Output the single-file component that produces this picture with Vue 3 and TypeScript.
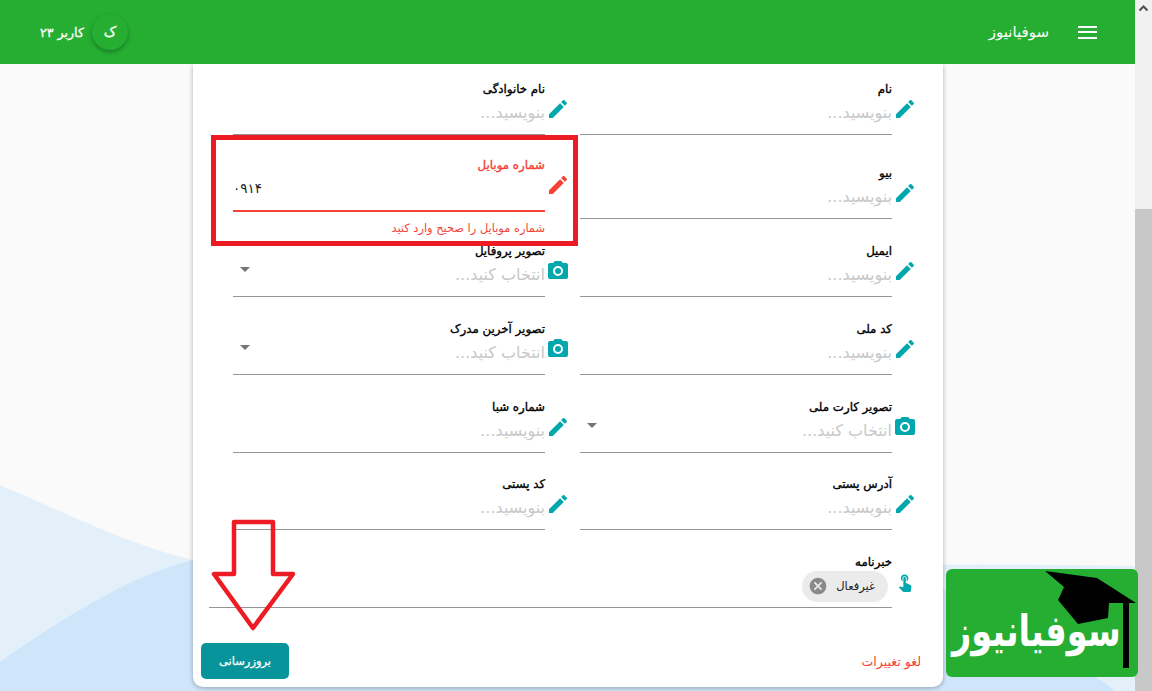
<script setup lang="ts">
interface Field { label: string; kind: 'text' | 'select' }
const rows: Field[][] = [
  [{ label: 'نام', kind: 'text' }, { label: 'نام خانوادگی', kind: 'text' }],
  [{ label: 'بیو', kind: 'text' }, { label: 'شماره موبایل', kind: 'text' }],
  [{ label: 'ایمیل', kind: 'text' }, { label: 'تصویر پروفایل', kind: 'select' }],
  [{ label: 'کد ملی', kind: 'text' }, { label: 'تصویر آخرین مدرک', kind: 'select' }],
  [{ label: 'تصویر کارت ملی', kind: 'select' }, { label: 'شماره شبا', kind: 'text' }],
  [{ label: 'آدرس پستی', kind: 'text' }, { label: 'کد پستی', kind: 'text' }],
]
const fields = rows.flat()
const pencil = 'M20.71,7.04C21.1,6.65 21.1,6 20.71,5.63L18.37,3.29C18,2.9 17.35,2.9 16.96,3.29L15.12,5.12L18.87,8.87M3,17.25V21H6.75L17.81,9.93L14.06,6.18L3,17.25Z'
const camera = 'M4,4H7L9,2H15L17,4H20A2,2 0 0,1 22,6V18A2,2 0 0,1 20,20H4A2,2 0 0,1 2,18V6A2,2 0 0,1 4,4M12,7A5,5 0 0,0 7,12A5,5 0 0,0 12,17A5,5 0 0,0 17,12A5,5 0 0,0 12,7M12,9A3,3 0 0,1 15,12A3,3 0 0,1 12,15A3,3 0 0,1 9,12A3,3 0 0,1 12,9Z'
</script>

<template>
  <div class="page">
    <div class="main">
      <svg class="waves" width="1135" height="691" viewBox="0 0 1135 691">
        <path d="M0,485C70,515 130,545 193,560C400,575 800,560 1135,566V691H0Z" fill="#e3f0fa" />
        <path d="M0,662C60,620 130,575 193,560C500,520 850,520 945,590C1010,630 1070,655 1115,691H0Z" fill="#cfe5f9" />
      </svg>

      <header class="bar" dir="rtl">
        <button class="burger" aria-label="menu"><i></i><i></i><i></i></button>
        <div class="brand">سوفیانیوز</div>
        <div class="spacer"></div>
        <div class="avatar">ک</div>
        <div class="user">کاربر ۲۳</div>
      </header>

      <section class="card" dir="rtl">
        <div class="grid">
          <div v-for="f in fields" :key="f.label" class="field" :class="{ bad: f.label === 'شماره موبایل' }">
            <svg class="ico" viewBox="0 0 24 24"><path :d="f.kind === 'text' ? pencil : camera" /></svg>
            <div class="ctl">
              <label>{{ f.label }}</label>
              <div class="line">
                <span v-if="f.label === 'شماره موبایل'" class="val">۰۹۱۴</span>
                <span v-else class="ph">{{ f.kind === 'text' ? 'بنویسید...' : 'انتخاب کنید...' }}</span>
                <span v-if="f.kind === 'select'" class="caret"></span>
              </div>
              <div v-if="f.label === 'شماره موبایل'" class="err">شماره موبایل را صحیح وارد کنید</div>
            </div>
          </div>
          <div class="field wide">
            <svg class="ico tap" viewBox="0 0 24 24"><path d="M9 11.24V7.5C9 6.12 10.12 5 11.5 5S14 6.12 14 7.5v3.74c1.21-.81 2-2.18 2-3.74C16 5.01 13.99 3 11.5 3S7 5.01 7 7.5c0 1.56.79 2.93 2 3.74zm9.84 4.63l-4.54-2.26c-.17-.07-.35-.11-.54-.11H13v-6c0-.83-.67-1.5-1.5-1.5S10 6.67 10 7.5v10.74l-3.43-.72c-.08-.01-.15-.03-.24-.03-.31 0-.59.13-.79.33l-.79.8 4.94 4.94c.27.27.65.44 1.06.44h6.79c.75 0 1.33-.55 1.44-1.28l.75-5.27c.01-.07.02-.14.02-.2 0-.62-.38-1.16-.91-1.38z" /></svg>
            <div class="ctl">
              <label>خبرنامه</label>
              <div class="line chipline">
                <span class="chip">
                  <span>غیرفعال</span>
                  <svg viewBox="0 0 24 24"><path d="M12,2C17.53,2 22,6.47 22,12C22,17.53 17.53,22 12,22C6.47,22 2,17.53 2,12C2,6.47 6.47,2 12,2M15.59,7L12,10.59L8.41,7L7,8.41L10.59,12L7,15.59L8.41,17L12,13.41L15.59,17L17,15.59L13.41,12L17,8.41L15.59,7Z" /></svg>
                </span>
              </div>
            </div>
          </div>
        </div>
        <div class="actions">
          <button class="cancel">لغو تغییرات</button>
          <button class="save">بروزرسانی</button>
        </div>
      </section>
    </div>

    <aside class="scroll">
      <svg class="up" width="17" height="17" viewBox="0 0 17 17"><path d="M4.5,10.5L8.5,6.5L12.5,10.5" fill="none" stroke="#505050" stroke-width="2" /></svg>
      <div class="thumb"></div>
    </aside>

    <div class="redbox"></div>
    <svg class="arrow" width="90" height="120" viewBox="0 0 90 120">
      <path d="M24,3H63V55H83L43,109L4,55H24Z" fill="none" stroke="#ed1c24" stroke-width="4.5" stroke-linejoin="round" />
    </svg>
    <div class="logo" dir="rtl">
      <svg width="192" height="108" viewBox="0 0 192 108">
        <path d="M99,2L151,9L190,34H183V99H177V34H163L162,49L132,55L112,31L118,18Z" fill="#000" />
      </svg>
      <span>سوفیانیوز</span>
    </div>
  </div>
</template>

<style>
html, body { margin: 0; overflow: hidden; }
</style>

<style scoped>
.page { position: relative; width: 1152px; height: 691px; overflow: hidden; display: flex; font-family: "DejaVu Sans", "Noto Sans", sans-serif; background: #fafafa; }
.main { position: relative; width: 1135px; height: 691px; flex: none; }
.waves { position: absolute; left: 0; top: 0; }
.bar { position: relative; z-index: 2; height: 64px; background: #25ae32; color: #fff; display: flex; align-items: center; padding: 0 38px 0 40px; box-sizing: border-box; }
.burger { width: 19px; height: 13px; padding: 0; background: none; border: 0; display: flex; flex-direction: column; justify-content: space-between; margin-left: 29px; }
.burger i { display: block; height: 2px; background: #fff; }
.brand { font-size: 15px; }
.spacer { flex: 1; }
.avatar { width: 36px; height: 36px; border-radius: 50%; background: #25ae32; box-shadow: 0 2px 4px rgba(0,0,0,.3); display: flex; align-items: center; justify-content: center; font-size: 14px; margin-left: 8px; -webkit-text-stroke: .3px #fff; }
.user { font-size: 12.6px; -webkit-text-stroke: .3px #fff; }
.card { position: relative; width: 750px; height: 623px; margin-left: 193px; box-sizing: border-box; background: #fff; border-radius: 0 0 10px 10px; box-shadow: 0 1px 5px rgba(0,0,0,.3); padding: 18px 26px 0 40px; }
.grid { display: grid; grid-template-columns: 337px 337px; column-gap: 10px; grid-template-rows: 53px 84px 78px 78px 78px 77px 78px; align-items: end; }
.field { display: flex; align-items: flex-start; height: 53px; position: relative; }
.ico { width: 24px; height: 24px; flex: none; margin: 15px 0 0 1px; fill: #00a8ad; }
.ctl { flex: 1; min-width: 0; height: 53px; box-sizing: border-box; border-bottom: 1px solid #949494; }
label { display: block; margin-top: -1px; font-size: 11.8px; line-height: 16px; color: #000; -webkit-text-stroke: .35px currentColor; }
.line { display: flex; justify-content: space-between; align-items: center; height: 30px; }
.ph { font-size: 16px; color: #c8c8c8; }
.val { font-size: 13.5px; color: #222; margin-right: auto; }
.caret { width: 0; height: 0; border: 5px solid transparent; border-top-color: #757575; border-bottom: 0; margin: 0 0 10px 7px; }
.bad { height: 78px; align-self: start; margin-top: 23px; }
.bad .ico { fill: #f44336; }
.bad .ctl { height: 54px; border-bottom: 2px solid #f44336; }
.bad label, .bad .err { color: #f44336; }
.err { font-size: 11.4px; line-height: 16px; margin-top: 17px; }
.wide { grid-column: 1 / -1; margin-left: -24px; }
.tap { width: 20px; height: 20px; margin: 17px 2px 0 3px; }
.chip { display: inline-flex; align-items: center; height: 31px; width: 86px; box-sizing: border-box; border-radius: 16px; background: #ebebeb; padding: 0 13px 0 6px; margin-right: 4px; font-size: 11.5px; color: #222; justify-content: space-between; }
.chip svg { width: 20px; height: 20px; fill: #8a8a8a; }
.chipline { height: 36px; margin-top: -2px; }
.actions { display: flex; justify-content: space-between; align-items: center; margin: 35px 0 0 -32px; }
.save { width: 88px; height: 36px; border: 0; border-radius: 5px; background: #07959b; color: #fff; font: 400 11.5px "DejaVu Sans", sans-serif; -webkit-text-stroke: .25px #fff; }
.cancel { border: 0; background: none; padding: 0; margin-right: -4px; color: #f44336; font: 400 12.5px "DejaVu Sans", sans-serif; }
.scroll { position: relative; width: 17px; flex: none; background: #f1f1f1; display: flex; flex-direction: column; }
.up { display: block; }
.thumb { width: 17px; height: 482px; margin-top: 192px; background: #c8c8c8; }
.redbox { position: absolute; left: 211px; top: 135px; width: 367px; height: 111px; box-sizing: border-box; border: 5px solid #ed1c24; z-index: 5; pointer-events: none; }
.arrow { position: absolute; left: 210px; top: 519px; z-index: 5; }
.logo { position: absolute; left: 946px; top: 569px; width: 192px; height: 108px; border-radius: 6px; background: #25ae32; z-index: 6; overflow: hidden; }
.logo svg { position: absolute; left: 0; top: 0; }
.logo span { position: absolute; left: 6px; top: 31px; font-size: 33.5px; font-weight: 700; color: #fff; white-space: nowrap; line-height: 64px; transform: scaleY(1.3); }
</style>
